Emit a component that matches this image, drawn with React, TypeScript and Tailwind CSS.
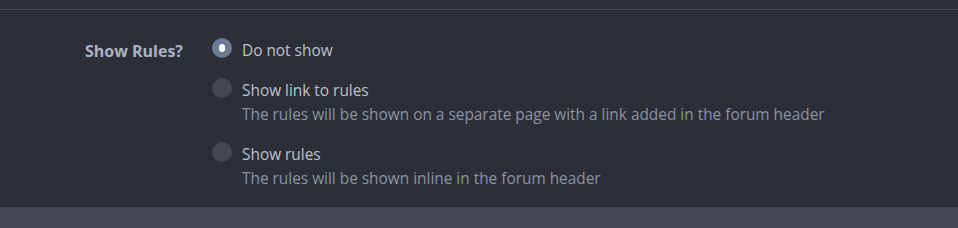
import { useState } from "react";

type Option = { value: string; label: string; hint?: string };

const options: Option[] = [
  { value: "none", label: "Do not show" },
  {
    value: "link",
    label: "Show link to rules",
    hint: "The rules will be shown on a separate page with a link added in the forum header",
  },
  {
    value: "inline",
    label: "Show rules",
    hint: "The rules will be shown inline in the forum header",
  },
];

export default function App() {
  const [selected, setSelected] = useState("none");

  return (
    <div
      className="w-[958px] h-[228px] bg-[#2d2f38] flex flex-col"
      style={{ fontFamily: '"Open Sans", "Noto Sans", sans-serif' }}
    >
      <div className="h-[9px]" />
      <div className="h-px bg-[#464953]" />
      <div className="flex pt-[29px] pb-[16px]">
        <div className="w-[183px] text-right text-[16px] leading-6 font-bold text-[#aab2c5]">
          Show Rules?
        </div>
        <div className="pl-[29px] flex flex-col gap-4">
          {options.map((o) => {
            const on = selected === o.value;
            return (
              <label key={o.value} className="flex items-start gap-[10px] cursor-pointer" onClick={() => setSelected(o.value)}>
                <span
                  className={`-mt-px w-5 h-5 rounded-full flex items-center justify-center shrink-0 ${
                    on ? "bg-[#6c7b94]" : "bg-[#434753]"
                  }`}
                >
                  {on && <span className="w-[6px] h-[8px] rounded-full bg-white" />}
                </span>
                <span className="flex flex-col text-[15.4px] leading-6">
                  <span className="text-[#bcc2ce]">{o.label}</span>
                  {o.hint && <span className="text-[#8c93a2]">{o.hint}</span>}
                </span>
              </label>
            );
          })}
        </div>
      </div>
      <div className="flex-1 bg-[#434853]" />
    </div>
  );
}
